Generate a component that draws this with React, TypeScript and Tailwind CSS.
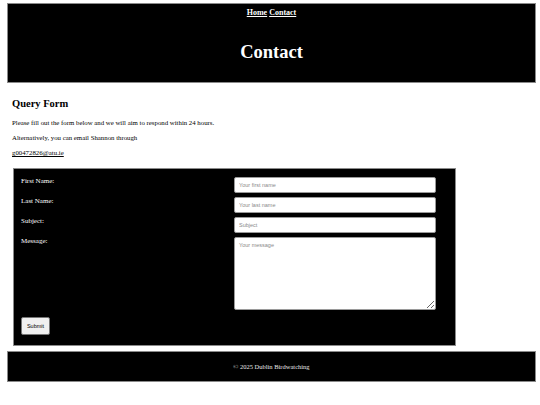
export default function App() {
  return (
    <div className="w-[540px] h-[405px] bg-white pt-[3px] pl-[7px] pr-[4px] font-['Liberation_Serif',serif] text-black">
      <header className="h-[80px] bg-black border border-[#8a8a8a] flex flex-col items-center text-white">
        <nav className="mt-[3px] text-[8px] font-bold leading-[12px] flex gap-[2px]">
          <a href="#" className="underline">Home</a>
          <a href="#" className="underline">Contact</a>
        </nav>
        <h1 className="mt-[22px] text-[18.5px] font-bold leading-[22px]">Contact</h1>
      </header>

      <main className="pl-[5px] pr-[80px]">
        <h2 className="mt-[14px] text-[10.5px] font-bold leading-[13px]">Query Form</h2>
        <p className="mt-[8px] text-[6.8px] leading-[9px]">
          Please fill out the form below and we will aim to respond within 24 hours.
        </p>
        <p className="mt-[6px] text-[6.8px] leading-[9px]">Alternatively, you can email Shannon through</p>
        <p className="mt-[6px] text-[6.8px] leading-[9px]">
          <a href="#" className="underline">g00472826@atu.ie</a>
        </p>

        <form className="mt-[11px] ml-[1px] h-[178px] bg-black border border-[#8a8a8a] pt-[8px] pl-[7px] pr-[19px] text-white">
          <div className="grid grid-cols-[213px_1fr] gap-y-[4px]">
            <label className="text-[7px] leading-[9px]">First Name:</label>
            <input
              placeholder="Your first name"
              className="h-[16px] bg-white rounded-[2px] border border-[#9a9a9a] px-[4px] text-[5.5px] text-black placeholder:text-[#8a8a8a] font-['Liberation_Sans',sans-serif]"
            />
            <label className="text-[7px] leading-[9px]">Last Name:</label>
            <input
              placeholder="Your last name"
              className="h-[16px] bg-white rounded-[2px] border border-[#9a9a9a] px-[4px] text-[5.5px] text-black placeholder:text-[#8a8a8a] font-['Liberation_Sans',sans-serif]"
            />
            <label className="text-[7px] leading-[9px]">Subject:</label>
            <input
              placeholder="Subject"
              className="h-[16px] bg-white rounded-[2px] border border-[#9a9a9a] px-[4px] text-[5.5px] text-black placeholder:text-[#8a8a8a] font-['Liberation_Sans',sans-serif]"
            />
            <label className="text-[7px] leading-[9px]">Message:</label>
            <textarea
              placeholder="Your message"
              className="h-[73px] bg-white rounded-[2px] border border-[#9a9a9a] px-[4px] py-[3px] text-[5.5px] text-black placeholder:text-[#8a8a8a] font-['Liberation_Sans',sans-serif]"
            />
          </div>
          <button
            type="button"
            className="mt-[7px] w-[29px] h-[18px] bg-[#f0f0f0] rounded-[2px] border border-[#767676] text-[5.5px] text-black font-['Liberation_Sans',sans-serif]"
          >
            Submit
          </button>
        </form>
      </main>

      <footer className="mt-[5px] h-[31px] bg-black border border-[#8a8a8a] flex items-center justify-center text-[#e8e8e8] text-[6.5px]">
        © 2025 Dublin Birdwatching
      </footer>
    </div>
  );
}
